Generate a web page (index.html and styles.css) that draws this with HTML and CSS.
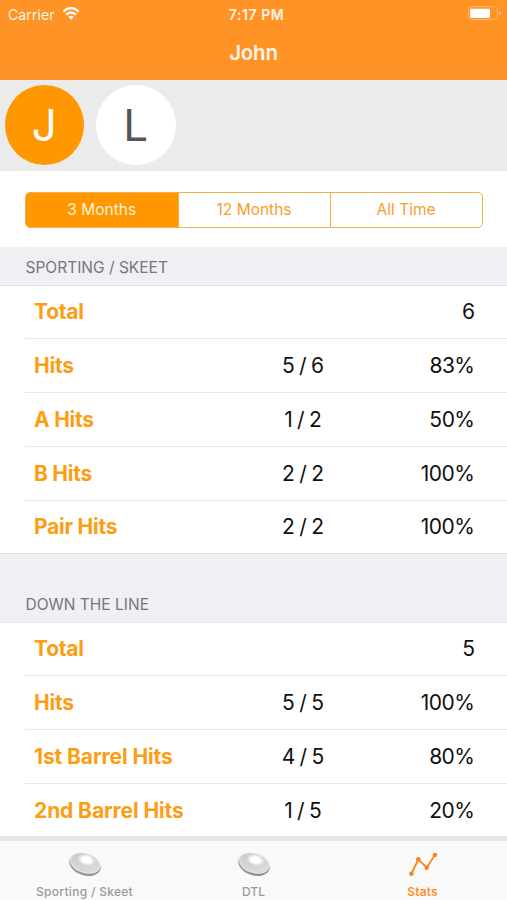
FILE: index.html
```html
<!DOCTYPE html>
<html lang="en">
<head>
<meta charset="utf-8">
<title>John</title>
<link rel="stylesheet" href="styles.css">
</head>
<body>
<div class="app">
  <header class="top">
    <div class="status">
      <div class="carrier">Carrier
        <svg class="wifi" width="18" height="13" viewBox="0 0 17 13" fill="none" stroke="#fff" stroke-width="2.3"><path d="M1 4.7C5-.1 12-.1 16 4.7M3.7 7.8c2.7-3.1 6.9-3.1 9.6 0"/><path d="M8.5 12.6L5.7 9.9q2.8-2.3 5.6 0z" fill="#fff" stroke="none"/></svg>
      </div>
      <div class="clock">7:17 PM</div>
      <svg class="battery" width="33" height="15" viewBox="0 0 33 15"><rect x=".7" y=".7" width="28.6" height="13" rx="3.2" fill="none" stroke="#ffb56c"/><rect x="2.2" y="2.7" width="19.8" height="9.3" rx="1.2" fill="#fff"/><path d="M31 5v4.6q1.6-.6 1.6-2.3T31 5z" fill="#ffc389"/></svg>
    </div>
    <h1>John</h1>
  </header>
  <div class="people">
    <div class="avatar active">J</div>
    <div class="avatar">L</div>
  </div>
  <div class="filter">
    <div class="segments">
      <div class="segment selected">3 Months</div>
      <div class="segment">12 Months</div>
      <div class="segment">All Time</div>
    </div>
  </div>
  <section>
    <h2><span>SPORTING / SKEET</span></h2>
    <div class="rows">
      <div class="row"><b>Total</b><span></span><span class="value">6</span></div>
      <div class="row"><b>Hits</b><span class="ratio">5 / 6</span><span class="value">83%</span></div>
      <div class="row"><b>A Hits</b><span class="ratio">1 / 2</span><span class="value">50%</span></div>
      <div class="row"><b>B Hits</b><span class="ratio">2 / 2</span><span class="value">100%</span></div>
      <div class="row"><b>Pair Hits</b><span class="ratio">2 / 2</span><span class="value">100%</span></div>
    </div>
  </section>
  <section>
    <h2 class="tall"><span>DOWN THE LINE</span></h2>
    <div class="rows">
      <div class="row"><b>Total</b><span></span><span class="value">5</span></div>
      <div class="row"><b>Hits</b><span class="ratio">5 / 5</span><span class="value">100%</span></div>
      <div class="row"><b class="wide">1st Barrel Hits</b><span class="ratio">4 / 5</span><span class="value">80%</span></div>
      <div class="row"><b class="wide">2nd Barrel Hits</b><span class="ratio">1 / 5</span><span class="value">20%</span></div>
    </div>
  </section>
  <nav class="tabs">
    <div class="tab">
      <svg width="34" height="26" viewBox="0 0 34 26"><defs><linearGradient id="rim" x2="1" y2="1"><stop stop-color="#aaa"/><stop offset="1" stop-color="#8c8c8c"/></linearGradient><linearGradient id="face" y2="1"><stop stop-color="#cacaca"/><stop offset="1" stop-color="#dedede"/></linearGradient><radialGradient id="shine"><stop offset=".5" stop-color="#fff"/><stop offset="1" stop-color="#fff" stop-opacity="0"/></radialGradient></defs><g id="clay"><ellipse cx="17" cy="13.6" rx="16.2" ry="10.8" transform="rotate(18 17 13.6)" fill="url(#rim)"/><ellipse cx="17.2" cy="12.2" rx="15.7" ry="9.9" transform="rotate(18 17.2 12.2)" fill="#e6e6e6"/><ellipse cx="17.2" cy="12" rx="14.6" ry="9" transform="rotate(18 17.2 12)" fill="url(#face)"/><ellipse cx="18.5" cy="8.8" rx="9" ry="5.8" transform="rotate(14 18.5 8.8)" fill="url(#shine)"/></g></svg>
      <span class="long">Sporting / Skeet</span>
    </div>
    <div class="tab">
      <svg width="34" height="26" viewBox="0 0 34 26"><use href="#clay"/></svg>
      <span>DTL</span>
    </div>
    <div class="tab current">
      <svg width="34" height="26" viewBox="0 0 34 26" fill="#ff7f18"><path d="M5.4 22.8L12.3 8.3l8.4 8.4 8.2-12.8" fill="none" stroke="#ff7f18" stroke-width="1.7"/><circle cx="5.4" cy="22.8" r="2.2"/><circle cx="12.3" cy="8.3" r="2.2"/><circle cx="20.7" cy="16.7" r="2.2"/><circle cx="28.9" cy="3.9" r="2.2"/></svg>
      <span>Stats</span>
    </div>
  </nav>
</div>
</body>
</html>
```
FILE: styles.css
```css
* { box-sizing: border-box; }
body { margin: 0; font-family: Inter, "Liberation Sans", sans-serif; color: #111; background: #fff; }
.app { width: 507px; height: 900px; overflow: hidden; display: flex; flex-direction: column; }
.top { height: 79.5px; flex: none; background: #ff9326; color: #fff; border-bottom: 1px solid #f0983c; }
.status { height: 28px; display: grid; grid-template-columns: 1fr auto 1fr; align-items: center; padding: 0 6px 0 8px; color: #fff4e6; }
.carrier { display: flex; align-items: center; gap: 7px; font-size: 14px; letter-spacing: .1px; }
.wifi { margin-top: -2px; }
.clock { font-size: 14px; font-weight: 600; letter-spacing: .55px; margin-left: 4px; }
.battery { justify-self: end; margin-top: -1px; }
h1 { margin: 12px 0 0; text-align: center; font-size: 20.5px; line-height: 25px; font-weight: 600; letter-spacing: -.2px; color: #fff4e6; }
.people { height: 91px; flex: none; display: flex; gap: 12px; padding: 5.5px 4.5px; background: #ebebeb; }
.avatar { width: 79.5px; height: 79.5px; border-radius: 50%; display: grid; place-items: center; font-size: 44px; background: #fff; color: #555; }
.avatar.active { background: #ff9800; color: #fff; }
.filter { height: 76px; flex: none; padding: 21px 24.4px 19px 25px; }
.segments { height: 36px; display: grid; grid-template-columns: 151.5px 1fr 1fr; border: 1.5px solid #f7ae48; border-radius: 5px; overflow: hidden; }
.segment { display: grid; place-items: center; font-size: 15.5px; color: #f6a02c; }
.segment + .segment { border-left: 1.5px solid #f7ae48; }
.segment.selected { background: #ff9800; color: #fff1d8; }
h2 { margin: 0; height: 39px; padding: 0 25.5px 8px; display: flex; align-items: flex-end; background: #efeff4; border-bottom: 1px solid #e4e4e8; font-size: 15.5px; line-height: 19px; font-weight: 400; color: #76767b; }
h2.tall { height: 69.5px; border-top: 1px solid #e0e0e3; }
.rows { padding-left: 25px; }
.row { height: 53.75px; display: grid; grid-template-columns: 209px 120px 1fr; align-items: center; padding: 0 32.5px 0 9px; font-size: 21px; border-bottom: 1px solid #e9e9eb; }
.row:last-child { height: 52.5px; border-bottom: 0; }
.row b { font-weight: 700; letter-spacing: -.25px; color: #fc9d13; white-space: nowrap; }
.row b.wide { letter-spacing: -.1px; }
.ratio { text-align: center; word-spacing: -1.5px; }
.value { text-align: right; letter-spacing: -.5px; }
.tabs { position: absolute; left: 0; top: 836px; width: 507px; height: 64px; display: grid; grid-template-columns: repeat(3, 1fr); background: #f9f9f9; border-top: 5px solid #e5e5e6; }
.tab { display: flex; flex-direction: column; align-items: center; padding-top: 10px; font-size: 12px; line-height: 15px; font-weight: 500; color: #999; }
.tab svg { margin-bottom: 7px; }
.long { letter-spacing: .3px; }
.tab.current { color: #ff8f2c; font-weight: 600; letter-spacing: .2px; }
```
